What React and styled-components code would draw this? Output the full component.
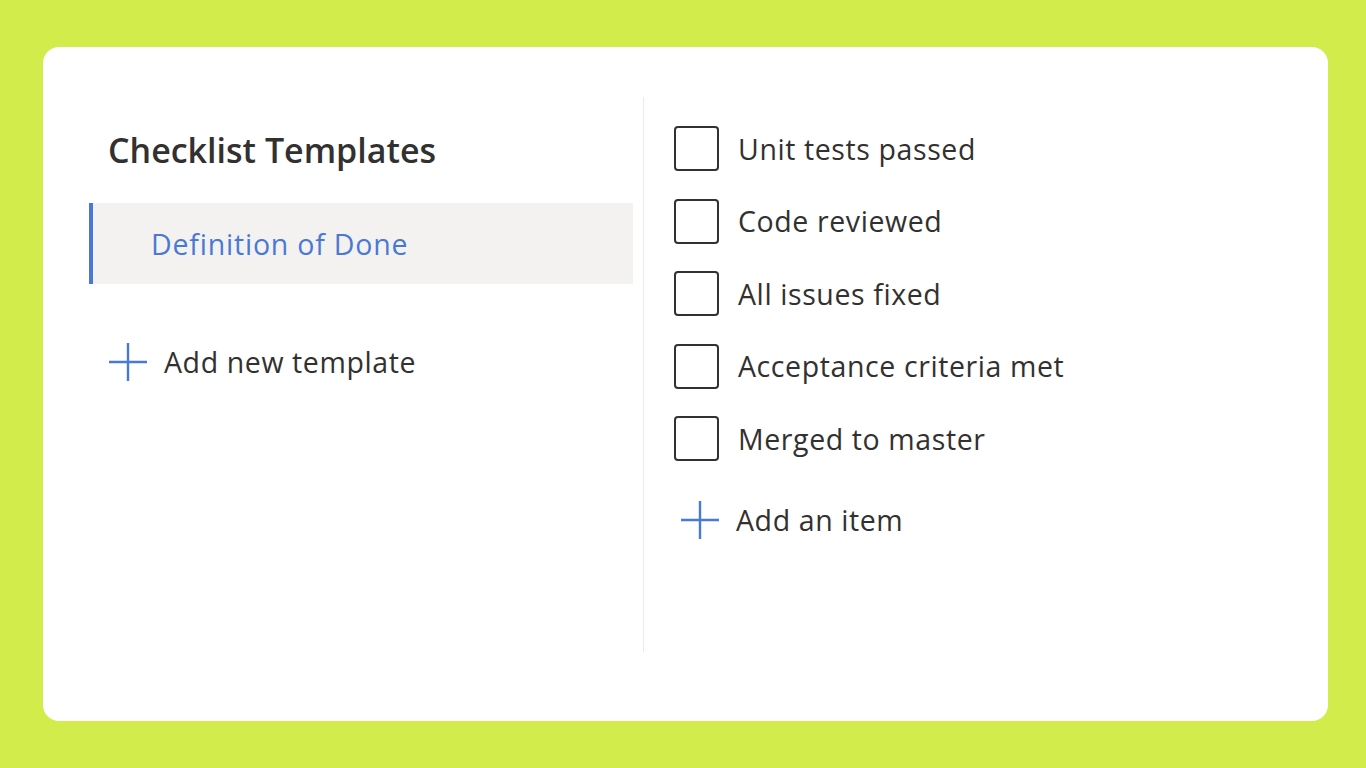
import styled, { createGlobalStyle } from 'styled-components';

const GlobalStyle = createGlobalStyle`
  html, body {
    margin: 0;
    padding: 0;
    background: #d2ec4c;
  }
  body {
    font-family: "Open Sans", "Noto Sans", sans-serif;
    color: #323130;
  }
`;

const Page = styled.div`
  width: 1366px;
  height: 768px;
  box-sizing: border-box;
  padding: 47px 38px 47px 43px;
  display: flex;
`;

const Card = styled.div`
  flex: 1;
  background: #ffffff;
  border-radius: 16px;
  display: flex;
  padding: 50px 0 69px 46px;
`;

const Sidebar = styled.div`
  width: 544px;
  display: flex;
  flex-direction: column;
  padding-top: 30px;
`;

const Title = styled.h1`
  margin: 0 0 30px 19px;
  font-size: 34px;
  line-height: 46px;
  font-weight: 600;
  color: #323130;
`;

const TemplateItem = styled.div`
  height: 81px;
  display: flex;
  align-items: center;
  box-sizing: border-box;
  padding-left: 58px;
  border-left: 4px solid ${(p) => (p.$active ? '#4a79d4' : 'transparent')};
  background: ${(p) => (p.$active ? '#f3f2f1' : 'transparent')};
  color: ${(p) => (p.$active ? '#4a79d4' : '#323130')};
  font-size: 28.5px;
  letter-spacing: 0.8px;
`;

const AddRow = styled.div`
  display: flex;
  align-items: center;
  gap: ${(p) => p.$gap}px;
  height: 44px;
  margin-top: ${(p) => p.$top}px;
  margin-left: ${(p) => p.$left}px;
  font-size: 28.5px;
  letter-spacing: 0.6px;
  color: #323130;
`;

const Divider = styled.div`
  width: 1px;
  margin-left: 10px;
  background: #edebe9;
`;

const Checklist = styled.div`
  display: flex;
  flex-direction: column;
  padding: 29px 0 0 30px;
`;

const Items = styled.div`
  display: flex;
  flex-direction: column;
  gap: 27.5px;
`;

const ItemRow = styled.label`
  display: flex;
  align-items: center;
  gap: 19px;
  height: 45px;
  font-size: 28.5px;
  letter-spacing: 0.6px;
  color: #323130;
`;

const Box = styled.span`
  width: 45px;
  height: 45px;
  box-sizing: border-box;
  border: 2px solid #323130;
  border-radius: 4px;
  flex-shrink: 0;
`;

function PlusIcon() {
  return (
    <svg width="38" height="38" viewBox="0 0 38 38">
      <path d="M19 0V38M0 19H38" stroke="#4a79d4" strokeWidth="2.4" fill="none" />
    </svg>
  );
}

const items = [
  'Unit tests passed',
  'Code reviewed',
  'All issues fixed',
  'Acceptance criteria met',
  'Merged to master',
];

export default function App() {
  return (
    <>
      <GlobalStyle />
      <Page>
        <Card>
          <Sidebar>
            <Title>Checklist Templates</Title>
            <TemplateItem $active>Definition of Done</TemplateItem>
            <AddRow $top={56} $left={20} $gap={17}>
              <PlusIcon />
              Add new template
            </AddRow>
          </Sidebar>
          <Divider />
          <Checklist>
            <Items>
              {items.map((text) => (
                <ItemRow key={text}>
                  <Box />
                  {text}
                </ItemRow>
              ))}
            </Items>
            <AddRow $top={37} $left={7} $gap={17}>
              <PlusIcon />
              Add an item
            </AddRow>
          </Checklist>
        </Card>
      </Page>
    </>
  );
}
